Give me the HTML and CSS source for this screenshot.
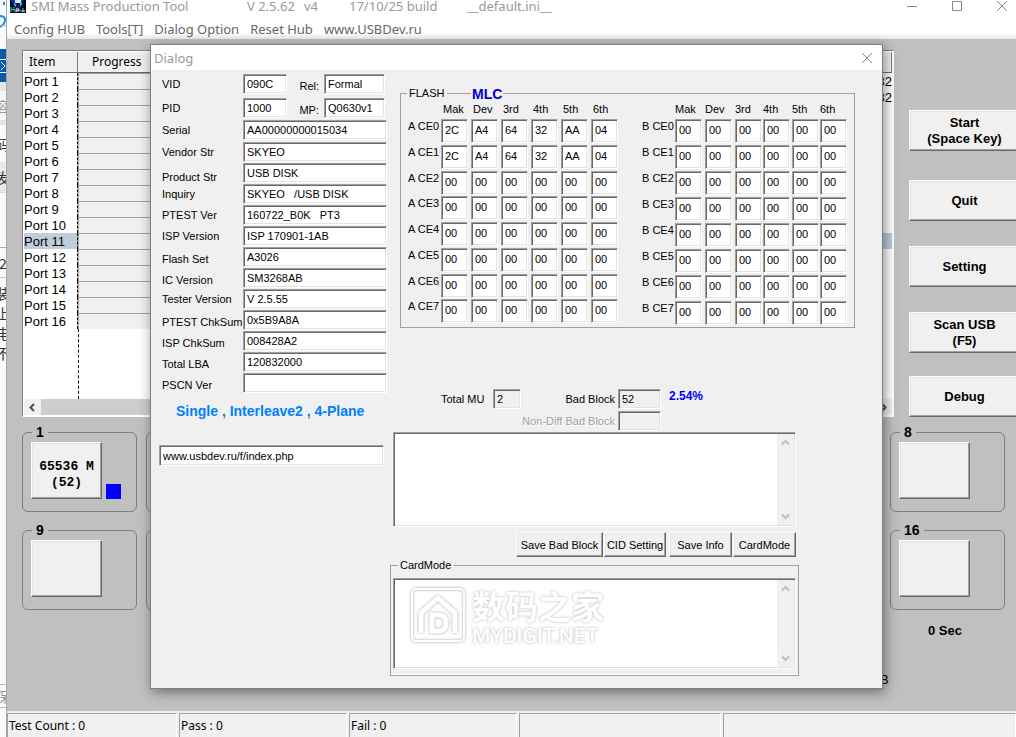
FILE: index.html
```html
<!DOCTYPE html>
<html lang="en">
<head>
<meta charset="utf-8">
<title>SMI Mass Production Tool</title>
<link rel="stylesheet" href="styles.css">
</head>
<body>
<aside class="backdrop" aria-hidden="true">
  <div class="bd bd-logo"><svg width="6" height="48"><path d="M4 1v3M0 15q5 0 5 4t-5 7" fill="none" stroke="#1e8ce0" stroke-width="2"/><path d="M0 24.500h6" stroke="#7cc4f4"/></svg></div>
  <div class="bd bd-blue"><svg width="6" height="33"><path d="M0 10.500h6M0 23.500h6M1 13l4 4-4 4" fill="none" stroke="#fff"/></svg></div>
  <div class="bd bd-pale"></div>
  <div class="bd bd-a faint">容</div>
  <div class="bd bd-b">码</div>
  <div class="bd bd-c">发</div>
  <div class="bd bd-d"></div>
  <div class="bd bd-e">2</div>
  <div class="bd bd-f"><span>装</span><span>上</span><span>电</span><span>不</span></div>
  <div class="bd bd-g faint">保</div>
</aside>

<main class="app">
  <header class="titlebar">
    <svg class="app-icon" width="16" height="14" viewBox="0 0 16 14"><path d="M0 0h16v13H0z" fill="#050510"/><path d="M1 0h4l2 4-2 2zM10 0h4l-4 5-2-2z" fill="#1530c8"/><path d="M5 0h6v3H5z" fill="#e0e8f0"/><path d="M4 4l3 3M12 3L9 7" stroke="#20d8d8" stroke-width="1.500"/><path d="M6 5h4v4H6z" fill="#102070"/><path d="M1 7v5M4 7v5M1 9.500h3M13 8v3h-3" fill="none" stroke="#20d0e0"/><path d="M6 12V9h3v2H6M12 11h3" fill="none" stroke="#fff"/></svg>
    <span class="t-name">SMI Mass Production Tool</span>
    <span class="t-ver">V 2.5.62</span>
    <span class="t-rev">v4</span>
    <span class="t-build">17/10/25 build</span>
    <span class="t-ini">__default.ini__</span>
    <div class="winbtns">
      <button aria-label="Minimize"><svg width="12" height="12"><path d="M1 6.500h10" stroke="#888"/></svg></button>
      <button aria-label="Maximize"><svg width="12" height="12"><path d="M1.500 1.500h9v9h-9z" fill="none" stroke="#888"/></svg></button>
      <button aria-label="Close"><svg width="12" height="12"><path d="M1 1l10 10M11 1L1 11" stroke="#888"/></svg></button>
    </div>
  </header>
  <nav class="menubar">
    <button>Config HUB</button><button>Tools[T]</button><button>Dialog Option</button><button>Reset Hub</button><button>www.USBDev.ru</button>
  </nav>

  <section class="workspace">
    <div class="top">
      <div class="list">
        <div class="list-scroll">
          <table class="ports">
            <colgroup><col class="c-item"><col class="c-prog"><col></colgroup>
            <thead><tr><th>Item</th><th>Progress</th><th></th></tr></thead>
            <tbody id="ports"></tbody>
          </table>
        </div>
        <div class="hscroll">
          <button aria-label="Scroll left"><svg width="9" height="9"><path d="M6 1L2.500 4.500 6 8" fill="none" stroke="#505050" stroke-width="2"/></svg></button>
          <button aria-label="Scroll right"><svg width="9" height="9"><path d="M3 1l3.500 3.500L3 8" fill="none" stroke="#505050" stroke-width="2"/></svg></button>
        </div>
      </div>
      <div class="actions">
        <button class="raised">Start<br>(Space Key)</button>
        <button class="raised">Quit</button>
        <button class="raised">Setting</button>
        <button class="raised">Scan USB<br>(F5)</button>
        <button class="raised">Debug</button>
      </div>
    </div>
    <div class="slots" id="slots"></div>
    <div class="timer">0 Sec</div>
    <div class="unit">B</div>
  </section>

  <footer class="status">
    <span class="s-count">Test Count : 0</span><span class="s-pass">Pass : 0</span><span class="s-fail">Fail : 0</span><span class="s-info"></span><span class="s-rest"></span>
  </footer>
</main>

<div class="dialog" role="dialog" aria-labelledby="dlg-title">
  <header class="dlg-head"><h1 id="dlg-title">Dialog</h1><button aria-label="Close dialog"><svg width="12" height="12"><path d="M1 1l10 10M11 1L1 11" stroke="#888"/></svg></button></header>
  <div class="dlg-body">
    <div class="left">
      <form class="info">
        <div class="row r-vid"><label for="vid">VID</label><input id="vid" class="sunken" value="090C"><label class="mid" for="rel">Rel:</label><input id="rel" class="sunken wide" value="Formal"></div>
        <div class="row r-pid"><label for="pid">PID</label><input id="pid" class="sunken" value="1000"><label class="mid" for="mp">MP:</label><input id="mp" class="sunken wide" value="Q0630v1"></div>
        <div class="row r-serial"><label for="f1">Serial</label><input id="f1" class="sunken" value="AA00000000015034"></div>
        <div class="row"><label for="f2">Vendor Str</label><input id="f2" class="sunken" value="SKYEO"></div>
        <div class="row lower"><label for="f3">Product Str</label><input id="f3" class="sunken" value="USB DISK"></div>
        <div class="row"><label for="f4">Inquiry</label><input id="f4" class="sunken" value="SKYEO   /USB DISK"></div>
        <div class="row"><label for="f5">PTEST Ver</label><input id="f5" class="sunken" value="160722_B0K   PT3"></div>
        <div class="row"><label for="f6">ISP Version</label><input id="f6" class="sunken" value="ISP 170901-1AB"></div>
        <div class="row low"><label for="f7">Flash Set</label><input id="f7" class="sunken" value="A3026"></div>
        <div class="row low"><label for="f8">IC Version</label><input id="f8" class="sunken" value="SM3268AB"></div>
        <div class="row"><label for="f9">Tester Version</label><input id="f9" class="sunken" value="V 2.5.55"></div>
        <div class="row low"><label for="f10">PTEST ChkSum</label><input id="f10" class="sunken" value="0x5B9A8A"></div>
        <div class="row low"><label for="f11">ISP ChkSum</label><input id="f11" class="sunken" value="008428A2"></div>
        <div class="row low"><label for="f12">Total LBA</label><input id="f12" class="sunken" value="120832000"></div>
        <div class="row low"><label for="f13">PSCN Ver</label><input id="f13" class="sunken" value=""></div>
      </form>
      <p class="mode">Single , Interleave2 , 4-Plane</p>
      <input class="sunken url" aria-label="Site address" value="www.usbdev.ru/f/index.php">
    </div>

    <div class="right">
      <fieldset class="group flash">
        <legend>FLASH</legend>
        <strong class="mlc">MLC</strong>
        <table class="matrix m-a" id="bankA"></table>
        <table class="matrix m-b" id="bankB"></table>
      </fieldset>

      <div class="stats">
        <label for="mu">Total MU</label><input id="mu" class="sunken off" value="2">
        <label for="bb">Bad Block</label><input id="bb" class="sunken off" value="52"><strong>2.54%</strong>
        <label for="nd" class="disabled">Non-Diff Bad Block</label><input id="nd" class="sunken off" disabled>
      </div>

      <div class="memo sunken log">
        <textarea aria-label="Bad block log"></textarea>
        <div class="vscroll"><svg width="9" height="7"><path d="M1 5.500L4.500 2 8 5.500" fill="none" stroke="#c0c0c0" stroke-width="2"/></svg><svg width="9" height="7"><path d="M1 1.500L4.500 5 8 1.500" fill="none" stroke="#c0c0c0" stroke-width="2"/></svg></div>
      </div>
      <div class="buttons">
        <button class="raised b-save">Save Bad Block</button><button class="raised b-cid">CID Setting</button><button class="raised b-info">Save Info</button><button class="raised b-card">CardMode</button>
      </div>
      <fieldset class="group card">
        <legend>CardMode</legend>
        <div class="memo sunken">
          <textarea aria-label="CardMode"></textarea>
          <div class="vscroll"><svg width="9" height="7"><path d="M1 5.500L4.500 2 8 5.500" fill="none" stroke="#c0c0c0" stroke-width="2"/></svg><svg width="9" height="7"><path d="M1 1.500L4.500 5 8 1.500" fill="none" stroke="#c0c0c0" stroke-width="2"/></svg></div>
        </div>
        <div class="watermark">
          <svg width="56" height="56" viewBox="0 0 56 56" fill="none" stroke="#fff"><rect x="2" y="2" width="52" height="52" rx="4" stroke-width="2"/><path d="M11 46V26L28 11l17 15v20" stroke-width="5"/><path d="M22 28h6q8 0 8 8t-8 8h-6z" stroke-width="5"/></svg>
          <div><div class="wm-cn">数码之家</div><div class="wm-en">MYDIGIT.NET</div></div>
        </div>
      </fieldset>
    </div>
  </div>
</div>
<script src="app.js"></script>
</body>
</html>
```
FILE: styles.css
```css
* { box-sizing: border-box; }
html, body { height: 100%; }
body { margin: 0; display: flex; overflow: hidden; position: relative; background: #fafafa; font: 11px/12px "Liberation Sans", Arial, sans-serif; color: #000; }
button, input, textarea { font: inherit; color: inherit; margin: 0; }
button { padding: 0; border: 0; background: none; }
svg { display: block; flex: none; }

.sunken { border: 1px solid; border-color: #a0a0a0 #fff #fff #a0a0a0; box-shadow: inset 1px 1px #696969, inset -1px -1px #e3e3e3; background: #fff; border-radius: 0; }
.raised { border: 1px solid; border-color: #fff #696969 #696969 #fff; box-shadow: inset -1px -1px #a0a0a0, inset 1px 1px #e3e3e3; background: #f0f0f0; }

/* Sliver of the window behind the tool */
.backdrop { width: 7px; flex: none; overflow: hidden; display: flex; flex-direction: column; border-right: 1px solid #a8a8a8; background: #fafafa; font: 14px/20px "Noto Sans CJK SC", sans-serif; color: #333; }
.bd { flex: none; overflow: hidden; display: flex; flex-direction: column; align-items: center; justify-content: center; }
.faint { color: #999; }
.bd-logo { height: 49px; }
.bd-blue { height: 33px; background: #0c58b0; }
.bd-pale { height: 9px; background: #dfe7ee; }
.bd-a { height: 29px; background: #f5f5f5; }
.bd-b { height: 42px; border-top: 5px solid #dfe7ee; }
.bd-c { height: 30px; background: #e4eaf0; }
.bd-d { height: 56px; border-top: 1px solid #ddd; border-bottom: 1px solid #aaa; }
.bd-e { height: 30px; border-bottom: 1px solid #ccc; }
.bd-f { height: 406px; justify-content: flex-start; padding-top: 5px; }
.bd-g { height: 24px; border-top: 1px solid #bbb; border-bottom: 1px solid #bbb; }

.app { flex: 1; min-width: 0; display: flex; flex-direction: column; background: #c0c0c0; }
.titlebar { display: flex; height: 18px; padding: 0 8px 0 3px; background: #fff; color: #999; font: 13px/12px "Noto Sans", sans-serif; white-space: pre; }
.t-name { margin-left: 5px; width: 216px; }
.t-ver { width: 57px; }
.t-rev { width: 45px; }
.t-build { width: 118px; }
.winbtns { margin-left: auto; display: flex; gap: 33px; height: 12px; padding-left: 10px; }
.menubar { display: flex; gap: 11px; height: 21px; padding: 0 7px; background: linear-gradient(#fff 15px, #e8e8e8); color: #666; font: 13px/20px "Noto Sans", sans-serif; }

.workspace { flex: 1; padding: 11px 0 0 15px; }
.top { display: flex; gap: 15px; }
.list { flex: 1; min-width: 0; height: 367px; padding: 1px; background: #fff; border: 1px solid; border-color: #808080 #fff #fff #808080; display: flex; flex-direction: column; }
.list-scroll { flex: 1; display: flex; flex-direction: column; }
.list-scroll::after { content: ""; flex: 1; width: 54px; border-right: 1px dashed #000; }
.ports { width: 100%; table-layout: fixed; border-collapse: separate; border-spacing: 0; font-size: 13px; line-height: 16px; }
.c-item { width: 54px; }
.c-prog { width: 80px; }
.ports th { height: 21px; padding: 0 0 1px 5px; font: 12px/18px "Noto Sans", sans-serif; text-align: left; background: #f0f0f0; border-right: 1px solid #808080; border-bottom: 1px solid #696969; }
.ports th + th { padding-left: 14px; }
.ports td { height: 16px; padding: 0; line-height: 15px; white-space: nowrap; }
.ports td:first-child { border-right: 1px dashed #000; }
.ports td:nth-child(2) { background: #f0f0f0; border-top: 1px solid #a0a0a0; border-left: 1px solid #a0a0a0; }
.ports td:last-child { text-align: right; }
.ports .sel td { background: #bfcddb; }
.ports .sel td:nth-child(2) { background: #f0f0f0; }
.hscroll { display: flex; justify-content: space-between; height: 16px; background: #cdcdcd; }
.hscroll button { width: 17px; background: #f0f0f0; display: grid; place-items: center; }

.actions { width: 107px; overflow: hidden; display: flex; flex-direction: column; padding-top: 60px; font: bold 13px/16px "Liberation Sans", Arial, sans-serif; }
.actions .raised { width: 111px; height: 41px; margin-bottom: 25px; }
.actions .raised:first-child { margin-bottom: 29px; }
.actions .raised:nth-child(4) { margin-bottom: 23px; }
.actions .raised:last-child { margin-bottom: 0; }

.slots { display: grid; grid-template-columns: repeat(8, 1fr); gap: 10px 9px; padding: 7px 11px 0 0; }
.slot { min-width: 0; height: 88px; margin: 0; padding: 2px 0 12px 8px; border: 1px solid #808080; border-radius: 6px; display: flex; align-items: flex-end; gap: 4px; }
.slot legend { padding: 0 4px; margin-left: 1px; font: bold 14px/16px "Liberation Sans", Arial, sans-serif; }
.slot button { width: 71px; height: 57px; padding-top: 8px; font: bold 13px/16px "Liberation Mono", monospace; }
.slot i { width: 15px; height: 15px; background: #00f; }
.timer { width: 120px; margin: 13px 11px 0 auto; text-align: center; font: bold 13px/16px "Liberation Sans", Arial, sans-serif; }
.unit { width: 120px; margin: 33px 16px 0 auto; font: 13px/16px "Liberation Sans", Arial, sans-serif; }

.status { display: flex; gap: 2px; height: 26px; padding-top: 2px; background: #f0f0f0; font: 12px/24px "Noto Sans", sans-serif; }
.status span { border: solid; border-width: 1px 1px 0; border-color: #a0a0a0 #fff #fff #a0a0a0; padding-left: 1px; }
.s-count { width: 170px; }
.s-pass, .s-fail { width: 168px; }
.s-info { width: 202px; }
.s-rest { flex: 1; }

.dialog { position: absolute; left: 150px; top: 44px; width: 733px; border: 1px solid #808080; background: #f0f0f0; box-shadow: 2px 3px 12px rgba(0,0,0,.45); }
.dlg-head { display: flex; align-items: center; justify-content: space-between; height: 25px; padding: 0 9px 0 3px; background: #fff; color: #999; }
.dlg-head h1 { margin: 0; font: 13px/20px "Noto Sans", sans-serif; }
.dlg-body { display: flex; justify-content: space-between; padding: 4px 27px 12px 8px; }
.left { width: 228px; }
.info { display: flex; flex-direction: column; gap: 1px; }
.row { display: flex; align-items: center; height: 20px; }
.row label { width: 84px; padding-left: 3px; white-space: nowrap; }
.row input { flex: 1; min-width: 0; height: 20px; padding: 0 2px 1px 3px; }
.r-vid { margin-bottom: 3px; }
.r-pid, .r-serial { margin-bottom: 1px; }
.r-vid input, .r-pid input { flex: none; width: 44px; }
.row input.wide { width: 61px; }
.row .mid { width: 37px; padding: 3px 5px 0 0; text-align: right; }
.low label { padding-top: 4px; }
.lower label { padding-top: 7px; }
.mode { margin: 9px 0 25px; padding-left: 17px; font: bold 14px/18px "Liberation Sans", Arial, sans-serif; color: #0080ff; white-space: nowrap; }
.url { display: block; width: 225px; height: 21px; padding: 0 3px; }

.right { width: 465px; padding-top: 13px; }
.group { margin: 0; padding: 0; border: 1px solid #a0a0a0; box-shadow: inset 0 -1px #fff; position: relative; min-width: 0; }
.group legend { margin-left: 5px; padding: 0 3px 0 2px; }
.flash { margin-left: 10px; display: flex; justify-content: space-between; padding: 4px 6px 0 6px; box-shadow: none; }
.flash legend { margin-left: 0; }
.mlc { position: absolute; left: 70px; top: 0; margin-top: -11px; padding: 0 1px; background: #f0f0f0; color: #00c; font-size: 14px; line-height: 12px; }
.matrix { border-collapse: collapse; table-layout: fixed; height: 222px; }
.matrix th { padding: 0; font-weight: normal; text-align: left; vertical-align: top; white-space: nowrap; }
.matrix thead th { height: 16px; padding-left: 2px; }
.m-b thead th { padding-left: 0; }
.matrix tbody th { padding: 1px 0 0 1px; }
.m-b tbody th { padding-left: 0; }
.matrix td { padding: 0; height: 24px; vertical-align: top; }
.matrix input { display: block; width: 27px; height: 24px; padding: 0 2px 2px 3px; }
.m-a { width: 214px; }
.m-b { width: 206px; height: 224px; }
.m-a .k-head { width: 34px; }
.m-b .k-head { width: 33px; }
.k-30 { width: 30px; }
.k-29 { width: 29px; }
.k-28 { width: 28px; }

.stats { display: grid; grid-template-columns: 52px 28px 1fr 43px 194px; grid-auto-rows: 20px; gap: 2px 0; align-items: center; margin: 61px 0 0 51px; }
.stats input { width: 100%; height: 20px; padding: 0 3px; min-width: 0; }
.stats label:nth-of-type(n+2) { text-align: right; padding-right: 3px; }
.stats .disabled { grid-column: 1 / 4; color: #a0a0a0; text-shadow: 1px 1px #fff; }
.stats strong { padding: 0 0 6px 8px; color: #00f; font-size: 12px; }
.off { background: #f0f0f0; }
.memo { display: flex; height: 95px; padding: 1px; }
.log { margin: 1px 59px 0 3px; }
.memo textarea { flex: 1; min-width: 0; border: 0; padding: 2px; resize: none; outline: 0; background: #fff; }
.vscroll { width: 17px; background: #f0f0f0; display: flex; flex-direction: column; align-items: center; justify-content: space-between; padding: 5px 0; }
.buttons { display: flex; gap: 1px; margin: 5px 59px 0 126px; }
.buttons button { height: 25px; white-space: nowrap; }
.b-save { width: 87px; }
.b-cid { width: 62px; margin-right: 2px; }
.b-info, .b-card { width: 63px; }
.card { margin: 2px 56px 0 0; padding: 7px 2px 6px; }
.card .memo { height: 91px; }
.watermark { position: absolute; left: 19px; top: 16px; display: flex; gap: 6px; color: #fff; pointer-events: none; }
.watermark svg { filter: drop-shadow(0 0 1px #bbb) drop-shadow(0 0 1px #ddd); }
.watermark > div { text-shadow: 0 0 2px #ccc, 0 0 3px #ccc; white-space: nowrap; }
.wm-cn { font: bold 33px/36px "Noto Sans CJK SC", sans-serif; }
.wm-en { font: 500 21px/26px Roboto, sans-serif; }
```
FILE: app.js
```js
const ports = document.getElementById('ports');
for (let n = 1; n <= 16; n++) {
  const tr = ports.insertRow();
  if (n === 11) tr.className = 'sel';
  tr.insertCell().textContent = 'Port ' + n;
  tr.insertCell();
  tr.insertCell().textContent = n < 3 ? '32' : '';
}

const slots = document.getElementById('slots');
for (let n = 1; n <= 16; n++) {
  const active = n === 1;
  slots.insertAdjacentHTML('beforeend',
    `<fieldset class="slot"><legend>${n}</legend><button class="raised" aria-label="Slot ${n}">${active ? '65536 M<br>(52)' : ''}</button>${active ? '<i></i>' : ''}</fieldset>`);
}

const used = ['2C', 'A4', '64', '32', 'AA', '04'];
const heads = ['Mak', 'Dev', '3rd', '4th', '5th', '6th'];

function bank(id, name, widths, filled) {
  let html = '<colgroup><col class="k-head">' + widths.map(w => `<col class="k-${w}">`).join('') + '</colgroup>';
  html += '<thead><tr><th></th>' + heads.map(h => `<th>${h}</th>`).join('') + '</tr></thead><tbody>';
  for (let r = 0; r < 8; r++) {
    html += `<tr><th>${name} CE${r}</th>` + heads.map((h, c) =>
      `<td><input class="sunken" aria-label="${name} CE${r} ${h}" value="${r < filled ? used[c] : '00'}"></td>`).join('') + '</tr>';
  }
  document.getElementById(id).innerHTML = html + '</tbody>';
}
bank('bankA', 'A', [30, 30, 30, 30, 30, 30], 2);
bank('bankB', 'B', [30, 30, 28, 29, 28, 28], 0);
```
